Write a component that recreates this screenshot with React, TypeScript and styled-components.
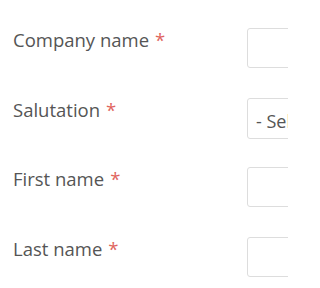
import styled, { createGlobalStyle } from "styled-components";

const GlobalStyle = createGlobalStyle`
  html, body {
    margin: 0;
    background: #fff;
    font-family: "Open Sans", "Liberation Sans", sans-serif;
    overflow: hidden;
  }
`;

const Form = styled.form`
  width: 288px;
  height: 288px;
  overflow: hidden;
  padding-top: 27px;
  box-sizing: border-box;
`;

const Row = styled.div`
  display: grid;
  grid-template-columns: 247px 200px;
  align-items: start;
  height: 69.5px;
`;

const Label = styled.label`
  padding-left: 13px;
  font-size: 18.5px;
  line-height: 26px;
  color: #555;
  white-space: nowrap;
`;

const Required = styled.span`
  color: #e0645e;
  margin-left: 6px;
`;

const Input = styled.input`
  box-sizing: border-box;
  width: 200px;
  height: 40px;
  margin: 1px 0 0;
  border: 1px solid #ddd;
  border-radius: 3px;
  padding: 0 10px;
  font: inherit;
  font-size: 18px;
  color: #555;
`;

const Select = styled.select`
  box-sizing: border-box;
  width: 200px;
  height: 41px;
  margin: 1px 0 0;
  border: 1px solid #ddd;
  border-radius: 3px;
  padding: 6px 8px 0;
  font: inherit;
  font-size: 18px;
  color: #555;
  background: #fff;
  appearance: none;
`;

const fields = [
  { id: "company", label: "Company name", kind: "input" },
  { id: "salutation", label: "Salutation", kind: "select" },
  { id: "first", label: "First name", kind: "input" },
  { id: "last", label: "Last name", kind: "input" },
];

const App: React.FC = () => (
  <>
    <GlobalStyle />
    <Form>
      {fields.map((f) => (
        <Row key={f.id}>
          <Label htmlFor={f.id}>
            {f.label}
            <Required>*</Required>
          </Label>
          {f.kind === "select" ? (
            <Select id={f.id} defaultValue="">
              <option value="">- Select -</option>
            </Select>
          ) : (
            <Input id={f.id} type="text" />
          )}
        </Row>
      ))}
    </Form>
  </>
);

export default App;
